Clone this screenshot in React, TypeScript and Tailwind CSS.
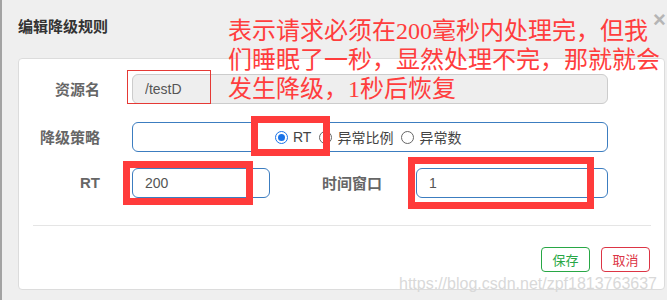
const cjk = "font-['Noto_Sans_CJK_SC',sans-serif]";
const latin = "font-['Liberation_Sans','Noto_Sans_CJK_SC',sans-serif]";

function Radio({ checked, label }: { checked?: boolean; label: string }) {
  return (
    <label className="flex items-center gap-[5px] text-[14px] text-[#444]">
      {checked ? (
        <span className="w-[13px] h-[13px] rounded-full border-[1.5px] border-[#1a73e8] flex items-center justify-center">
          <span className="w-[7px] h-[7px] rounded-full bg-[#1a73e8]" />
        </span>
      ) : (
        <span className="w-[13px] h-[13px] rounded-full border border-[#666] bg-white" />
      )}
      <span>{label}</span>
    </label>
  );
}

export default function App() {
  return (
    <div className={`relative w-[667px] h-[300px] overflow-hidden bg-[#efefef] flex ${cjk}`}>
      <div className="w-[2px] bg-[#a3a3a3]" />
      <div className="flex-1 pl-[16px]">
        {/* Title */}
        <div className="h-[58px] pt-[16px]">
          <h4 className="text-[15px] leading-[20px] font-bold text-[#333]">编辑降级规则</h4>
        </div>

        {/* Form card */}
        <div className="w-[647px] h-[232px] bg-white border border-[#dcdcdc] rounded-[4px] pt-[15px]">
          <div className="flex items-center h-[30px]">
            <div className="w-[81px] text-right text-[15px] font-bold text-[#666]">资源名</div>
            <input
              readOnly
              value="/testD"
              className={`ml-[32px] w-[476px] h-[30px] px-[12px] bg-[#eeeeee] border border-[#cccccc] rounded-[6px] text-[14px] text-[#555] outline-none ${latin}`}
            />
          </div>

          <div className="flex items-center h-[30px] mt-[18px]">
            <div className="w-[81px] text-right text-[15px] font-bold text-[#666]">降级策略</div>
            <div className="ml-[32px] w-[476px] h-[30px] border border-[#3c7dc0] rounded-[6px] flex items-center pl-[142px] gap-[8px]">
              <span className={latin}>
                <Radio checked label="RT" />
              </span>
              <Radio label="异常比例" />
              <Radio label="异常数" />
            </div>
          </div>

          <div className="flex items-center h-[30px] mt-[16px]">
            <div className={`w-[81px] text-right text-[15px] font-bold text-[#666] ${latin}`}>RT</div>
            <input
              readOnly
              value="200"
              className={`ml-[32px] w-[138px] h-[30px] px-[12px] border border-[#3c7dc0] rounded-[6px] text-[14px] text-[#555] outline-none ${latin}`}
            />
            <div className="w-[112px] text-right text-[15px] font-bold text-[#666]">时间窗口</div>
            <input
              readOnly
              value="1"
              className={`ml-[34px] w-[192px] h-[30px] px-[12px] border border-[#3c7dc0] rounded-[6px] text-[14px] text-[#555] outline-none ${latin}`}
            />
          </div>

          <div className="mt-[27px] ml-[14px] mr-[13px] border-t border-[#e5e5e5]" />

          <div className="mt-[21px] pr-[14px] flex justify-end gap-[11px]">
            <button className="w-[49px] h-[25px] border border-[#28a745] rounded-[4px] text-[13px] text-[#28a745] bg-white">
              保存
            </button>
            <button className="w-[49px] h-[25px] border border-[#dc3545] rounded-[4px] text-[13px] text-[#dc3545] bg-white">
              取消
            </button>
          </div>
        </div>
      </div>

      {/* close */}
      <span className={`absolute left-[653px] top-[3px] text-[22px] font-bold text-[#b5b5b5] ${latin}`}>×</span>

      {/* annotation boxes */}
      <div className="absolute left-[127px] top-[70px] w-[84px] h-[34px] border border-[#e53935]" />
      <div className="absolute left-[251px] top-[116px] w-[79px] h-[40px] border-[7px] border-[#ff3b3b]" />
      <div className="absolute left-[123px] top-[161px] w-[130px] h-[44px] border-[7px] border-[#ff3b3b]" />
      <div className="absolute left-[408px] top-[157px] w-[186px] h-[52px] border-[7px] border-[#ff3b3b]" />

      {/* annotation text */}
      <div className="absolute left-[228px] top-[17px] text-[24px] leading-[29px] text-[#ff3d3d] font-['Liberation_Serif','Noto_Sans_CJK_SC',serif]">
        <div>表示请求必须在200毫秒内处理完，但我</div>
        <div>们睡眠了一秒，显然处理不完，那就就会</div>
        <div>发生降级，1秒后恢复</div>
      </div>

      {/* watermark */}
      <div className={`absolute right-[10px] top-[272px] text-[16px] text-[#d9d9d9] ${latin}`}>
        https://blog.csdn.net/zpf1813763637
      </div>
    </div>
  );
}
